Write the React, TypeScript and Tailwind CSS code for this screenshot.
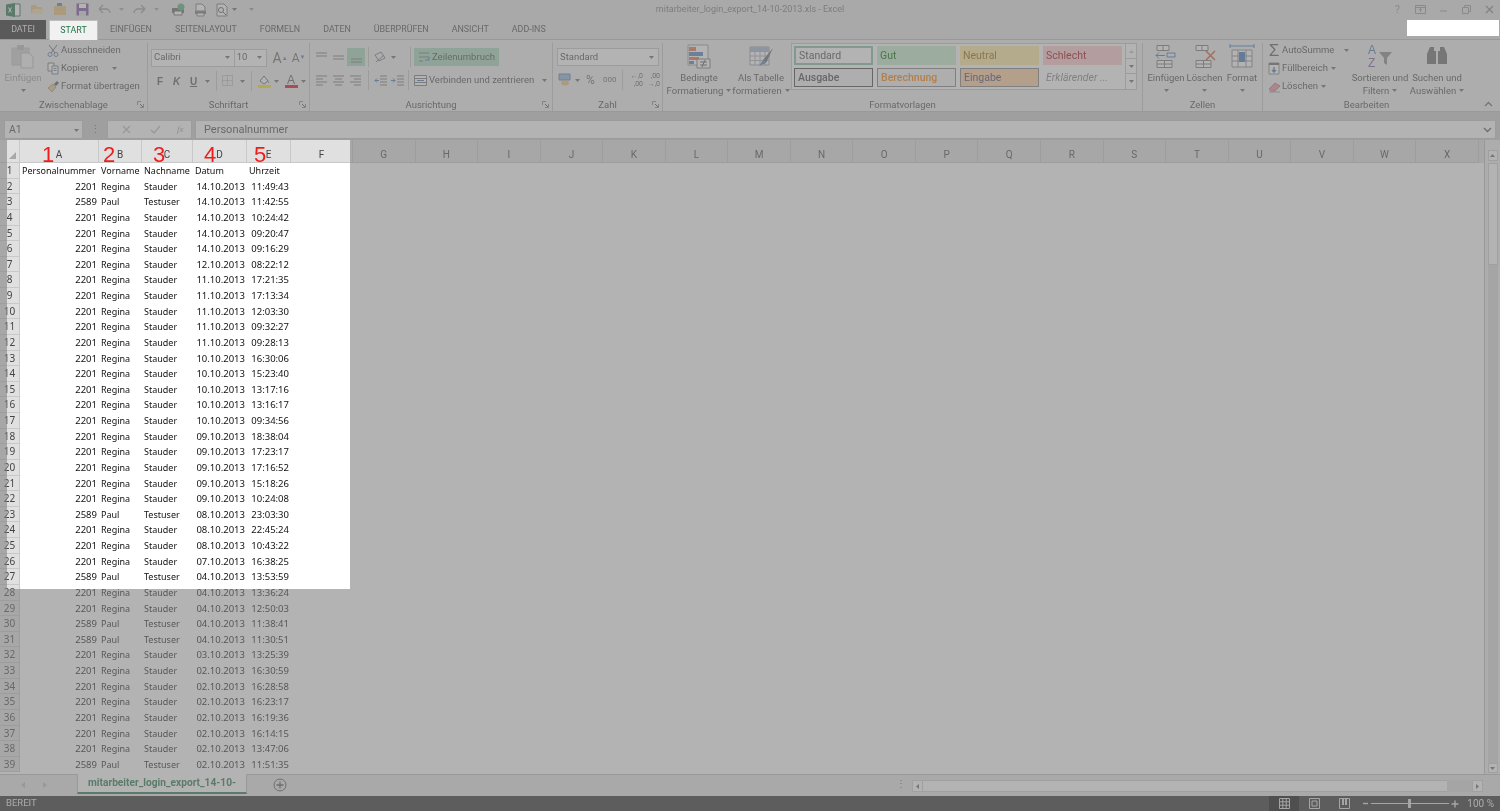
import React from "react";

const R = ["Regina", "Stauder"];
const P = ["Paul", "Testuser"];
const rows: [string[], string, string][] = [
  [R, "14.10.2013", "11:49:43"], [P, "14.10.2013", "11:42:55"], [R, "14.10.2013", "10:24:42"], [R, "14.10.2013", "09:20:47"],
  [R, "14.10.2013", "09:16:29"], [R, "12.10.2013", "08:22:12"], [R, "11.10.2013", "17:21:35"], [R, "11.10.2013", "17:13:34"],
  [R, "11.10.2013", "12:03:30"], [R, "11.10.2013", "09:32:27"], [R, "11.10.2013", "09:28:13"], [R, "10.10.2013", "16:30:06"],
  [R, "10.10.2013", "15:23:40"], [R, "10.10.2013", "13:17:16"], [R, "10.10.2013", "13:16:17"], [R, "10.10.2013", "09:34:56"],
  [R, "09.10.2013", "18:38:04"], [R, "09.10.2013", "17:23:17"], [R, "09.10.2013", "17:16:52"], [R, "09.10.2013", "15:18:26"],
  [R, "09.10.2013", "10:24:08"], [P, "08.10.2013", "23:03:30"], [R, "08.10.2013", "22:45:24"], [R, "08.10.2013", "10:43:22"],
  [R, "07.10.2013", "16:38:25"], [P, "04.10.2013", "13:53:59"], [R, "04.10.2013", "13:36:24"], [R, "04.10.2013", "12:50:03"],
  [P, "04.10.2013", "11:38:41"], [P, "04.10.2013", "11:30:51"], [R, "03.10.2013", "13:25:39"], [R, "02.10.2013", "16:30:59"],
  [R, "02.10.2013", "16:28:58"], [R, "02.10.2013", "16:23:17"], [R, "02.10.2013", "16:19:36"], [R, "02.10.2013", "16:14:15"],
  [R, "02.10.2013", "13:47:06"], [P, "02.10.2013", "11:51:35"],
];

const cols: [string, string][] = [
  ["A", "w-[79px]"], ["B", "w-[43px]"], ["C", "w-[51px]"], ["D", "w-[54px]"], ["E", "w-[44px]"],
  ["F", "w-[62px]"], ["G", "w-[62.55px]"], ["H", "w-[62.55px]"], ["I", "w-[62.55px]"], ["J", "w-[62.55px]"], ["K", "w-[62.55px]"],
  ["L", "w-[62.55px]"], ["M", "w-[62.55px]"], ["N", "w-[62.55px]"], ["O", "w-[62.55px]"], ["P", "w-[62.55px]"], ["Q", "w-[62.55px]"],
  ["R", "w-[62.55px]"], ["S", "w-[62.55px]"], ["T", "w-[62.55px]"], ["U", "w-[62.55px]"], ["V", "w-[62.55px]"], ["W", "w-[62.55px]"], ["X", "w-[62.55px]"],
];

const Caret = ({ className = "" }: { className?: string }) => (
  <svg width="5" height="3" viewBox="0 0 5 3" className={`shrink-0 ${className}`}><path d="M0 0h5L2.5 3z" fill="#666" /></svg>
);

const Sep = () => <div className="w-px h-[20px] bg-[#c6c6c6] shrink-0" />;

const Launcher = () => (
  <svg width="7" height="7" viewBox="0 0 7 7" className="absolute right-[3px] bottom-[3px]">
    <path d="M.5 4V.5H4M6.5 3v3.500H3" fill="none" stroke="#8a8a8a" /><path d="M3 3l3 3" stroke="#555" />
  </svg>
);

const Group = ({ w, label, children, last }: { w: string; label: string; children?: React.ReactNode; last?: boolean }) => (
  <div className={`${w} relative shrink-0 flex flex-col h-[68px] ${last ? "" : "border-r border-[#c6c6c6]"}`}>
    <div className="flex-1 min-h-0">{children}</div>
    <div className="h-[13px] leading-[13px] text-center text-[9.500px] text-[#444]">{label}</div>
  </div>
);

const BigBtn = ({ w, l1, l2, caret, icon, muted }: { w: string; l1: string; l2?: string; caret?: boolean; icon: React.ReactNode; muted?: boolean }) => (
  <div className={`${w} shrink-0 flex flex-col items-center text-[9.500px] leading-[13px] ${muted ? "text-[#9a9a9a]" : "text-[#444]"}`}>
    <div className="h-[26px] flex items-center justify-center">{icon}</div>
    <div className="mt-[2px] whitespace-nowrap">{l1}</div>
    <div className="flex items-center gap-[3px] h-[13px] whitespace-nowrap">{l2}{caret && <Caret />}</div>
  </div>
);

const SmallRow = ({ icon, label, caret, gap = "ml-[4px]" }: { icon: React.ReactNode; label: string; caret?: boolean; gap?: string }) => (
  <div className="h-[18px] flex items-center text-[9.500px] text-[#444] whitespace-nowrap">
    <span className="w-[14px] flex justify-center">{icon}</span>
    <span className="ml-[1px]">{label}</span>
    {caret && <Caret className={gap} />}
  </div>
);

const AlignIcon = ({ kind }: { kind: "l" | "c" | "r" | "t" | "m" | "b" }) => {
  const ls: Record<string, string> = {
    l: "M1 2h11M1 5h7M1 8h11M1 11h7",
    c: "M1 2h11M3 5h7M1 8h11M3 11h7",
    r: "M1 2h11M5 5h7M1 8h11M5 11h7",
    t: "M1 2h11M1 5h11",
    m: "M1 5h11M1 8h11",
    b: "M1 8h11M1 11h11",
  };
  return <svg width="13" height="13" viewBox="0 0 13 13"><path d={ls[kind]} stroke="#777" fill="none" /></svg>;
};

const Grid3 = ({ hi }: { hi?: React.ReactNode }) => (
  <svg width="26" height="26" viewBox="0 0 26 26">
    <path d="M4 2.500h12v5H4zM4 2.500h6v5M4 17.500h15v7H4zM4 21h15M11.500 17.500v7" fill="#fff" stroke="#777" />
    {hi}
  </svg>
);

const Style = ({ text, cls }: { text: string; cls: string }) => (
  <div className={`h-[19px] w-[79px] shrink-0 flex items-center pl-[3px] text-[10.500px] whitespace-nowrap overflow-hidden ${cls}`}>{text}</div>
);

function Ribbon() {
  return (
    <div className="h-[73px] bg-[#f1f1f1] border-t border-[#bdbdbd] border-b flex pt-[3px] pl-0 shrink-0 relative">
      <Group w="w-[148px]" label="Zwischenablage">
        <div className="flex">
          <BigBtn w="w-[46px]" l1="Einfügen" muted caret icon={
            <svg width="24" height="26" viewBox="0 0 24 26"><path d="M1 5h17v17H1z" fill="#d0d0d0" stroke="#c0c0c0" /><path d="M6 2h7v5H6z" fill="#bbb" /><path d="M10 10h8l4 4v11H10z" fill="#f5f5f5" stroke="#bbb" /></svg>
          } />
          <div className="flex flex-col -mt-[1.500px]">
            <SmallRow label="Ausschneiden" icon={<svg width="12" height="13" viewBox="0 0 12 13"><path d="M2 1l6 8M10 1L4 9" stroke="#667" fill="none" /><circle cx="3" cy="10.500" r="2" fill="none" stroke="#5f7fa8" /><circle cx="9" cy="10.500" r="2" fill="none" stroke="#5f7fa8" /></svg>} />
            <SmallRow label="Kopieren" caret gap="ml-[14px]" icon={<svg width="12" height="13" viewBox="0 0 12 13"><path d="M1 1h6v8H1z" fill="#fff" stroke="#777" /><path d="M5 4h6v8H5z" fill="#fff" stroke="#777" /><path d="M6.500 6.500h3M6.500 8.500h3" stroke="#5f7fa8" /></svg>} />
            <SmallRow label="Format übertragen" icon={<svg width="13" height="13" viewBox="0 0 13 13"><path d="M1 8l5-4 3 3-4 5z" fill="#e2c68f" stroke="#b59b6a" /><path d="M7 4l3-3 2 2-3 3z" fill="#555" /></svg>} />
          </div>
        </div>
        <Launcher />
      </Group>

      <Group w="w-[162px]" label="Schriftart">
        <div className="pl-[3px] flex items-center h-[19px] mt-[5px] text-[9.500px] text-[#444]">
          <div className="w-[87px] h-[18px] bg-white border border-[#c6c6c6] flex items-center justify-between px-[2px]">Calibri<Caret className="mr-[2px]" /></div>
          <div className="w-[33px] h-[18px] bg-white border border-l-0 border-[#c6c6c6] flex items-center justify-between px-[2px]">10<Caret className="mr-[2px]" /></div>
          <span className="ml-[6px] w-[20px] text-[14px] text-[#666] leading-none">A<sup className="text-[#4f81bd] text-[6px]">▲</sup></span>
          <span className="w-[18px] text-[12px] text-[#666] leading-none">A<sup className="text-[#4f81bd] text-[6px]">▼</sup></span>
        </div>
        <div className="pl-[4px] flex items-center h-[18px] mt-[5px] text-[10px] text-[#555]">
          <span className="w-[16px] text-center font-bold font-['Liberation_Sans']">F</span>
          <span className="w-[17px] text-center font-bold italic font-['Liberation_Sans']">K</span>
          <span className="w-[17px] text-center font-bold underline font-['Liberation_Sans']">U</span>
          <Caret className="ml-[3px]" />
          <span className="ml-[6px]"><Sep /></span>
          <svg width="12" height="12" viewBox="0 0 12 12" className="ml-[5px]"><path d="M.500.500h10v10H.500zM5.500.500v10M.500 5.500h10" fill="none" stroke="#999" strokeDasharray="1 1" /></svg>
          <Caret className="ml-[6px]" />
          <span className="ml-[6px]"><Sep /></span>
          <span className="ml-[5px] w-[14px] flex flex-col items-center">
            <svg width="12" height="10" viewBox="0 0 12 10"><path d="M2 6l4-5 4 5-4 3z" fill="#fff" stroke="#666" /><path d="M9 5l2 3" stroke="#5f7fa8" /></svg>
            <span className="w-[13px] h-[3px] bg-[#ffe600]" />
          </span>
          <Caret className="ml-[3px]" />
          <span className="ml-[5px] w-[14px] flex flex-col items-center leading-[10px] text-[#555] font-['Liberation_Sans'] text-[12px]">A<span className="w-[13px] h-[3px] bg-[#e00010]" /></span>
          <Caret className="ml-[3px]" />
        </div>
        <Launcher />
      </Group>

      <Group w="w-[243px]" label="Ausrichtung">
        <div className="flex items-center h-[18px] mt-[5px] pl-[5px] text-[9.500px] text-[#444]">
          <span className="w-[17px]"><AlignIcon kind="t" /></span>
          <span className="w-[14px]"><AlignIcon kind="m" /></span>
          <span className="w-[18px] h-[18px] bg-[#a9d8bf] flex items-center justify-center ml-[1px]"><AlignIcon kind="b" /></span>
          <span className="ml-[3px]"><Sep /></span>
          <svg width="14" height="13" viewBox="0 0 14 13" className="ml-[5px]"><path d="M1 4l6-3 4 6-6 3z" fill="none" stroke="#777" /><path d="M2 11l8-7" stroke="#5f7fa8" /></svg>
          <Caret className="ml-[3px]" />
          <span className="ml-[14px]"><Sep /></span>
          <div className="ml-[3px] w-[85px] h-[18px] bg-[#a9d8bf] flex items-center pl-[4px]">
            <svg width="12" height="13" viewBox="0 0 12 13"><path d="M1 2h10M1 6h7M1 10h4" stroke="#777" /><path d="M8 6h3v3H7" fill="none" stroke="#3a76b8" /></svg>
            <span className="ml-[2px]">Zeilenumbruch</span>
          </div>
        </div>
        <div className="flex items-center h-[18px] mt-[5px] pl-[5px] text-[9.500px] text-[#444]">
          <span className="w-[17px]"><AlignIcon kind="l" /></span>
          <span className="w-[17px]"><AlignIcon kind="c" /></span>
          <span className="w-[17px]"><AlignIcon kind="r" /></span>
          <span className="ml-[2px]"><Sep /></span>
          <span className="ml-[5px] w-[17px] flex"><svg width="13" height="13" viewBox="0 0 13 13"><path d="M6 2h7M6 5h7M6 8h7M6 11h7" stroke="#777" /><path d="M5 6.500H1l2-2M1 6.500l2 2" fill="none" stroke="#3a76b8" /></svg></span>
          <span className="w-[14px] flex"><svg width="13" height="13" viewBox="0 0 13 13"><path d="M6 2h7M6 5h7M6 8h7M6 11h7" stroke="#777" /><path d="M0 6.500h4l-2-2M4 6.500l-2 2" fill="none" stroke="#3a76b8" /></svg></span>
          <span className="ml-[3px]"><Sep /></span>
          <svg width="13" height="13" viewBox="0 0 13 13" className="ml-[5px] shrink-0"><path d="M.500 1.500h12v10H.500zM.500 4.500h12M.500 8.500h12" fill="#fff" stroke="#777" /><path d="M3 6.500h7" stroke="#3a76b8" /></svg>
          <span className="ml-[2px] whitespace-nowrap">Verbinden und zentrieren</span>
          <Caret className="ml-[8px]" />
        </div>
        <Launcher />
      </Group>

      <Group w="w-[110px]" label="Zahl">
        <div className="pl-[4px] mt-[5px] text-[9.500px] text-[#444]">
          <div className="w-[102px] h-[18px] bg-white border border-[#c6c6c6] flex items-center justify-between px-[2px]">Standard<Caret className="mr-[2px]" /></div>
        </div>
        <div className="flex items-center h-[18px] mt-[5px] pl-[5px] text-[#666]">
          <svg width="14" height="14" viewBox="0 0 14 14"><path d="M1 1h11v6H1z" fill="#8fb3dc" stroke="#5f7fa8" /><ellipse cx="7" cy="10" rx="4" ry="2.500" fill="#e8c27a" /></svg>
          <Caret className="ml-[3px]" />
          <span className="ml-[6px] w-[15px] text-[12px] leading-none">%</span>
          <span className="ml-[2px] w-[17px] text-[8px] leading-none">000</span>
          <span className="ml-[2px]"><Sep /></span>
          <span className="ml-[4px] w-[16px] text-[7px] leading-[8px] text-[#555] text-right">←,0<br />,00</span>
          <span className="ml-[1px] w-[16px] text-[7px] leading-[8px] text-[#555] text-right">,00<br />→,0</span>
        </div>
        <Launcher />
      </Group>

      <Group w="w-[480px]" label="Formatvorlagen">
        <div className="flex">
          <BigBtn w="w-[66px] ml-[3px]" l1="Bedingte" l2="Formatierung" caret icon={
            <svg width="24" height="25" viewBox="0 0 24 25"><path d="M1 1h20v20H1z" fill="#fff" stroke="#999" /><path d="M2 3h7v4H2z" fill="#e0704a" /><path d="M2 8h14v4H2z" fill="#4f81bd" /><path d="M2 13h10v3H2z" fill="#e0704a" /><path d="M2 17h5v3H2z" fill="#4f81bd" /><path d="M10 15h13v9H10z" fill="#fff" stroke="#777" /><path d="M13 18h7M13 21h7M18 16l-3 7" stroke="#555" fill="none" /></svg>
          } />
          <BigBtn w="w-[58px]" l1="Als Tabelle" l2="formatieren" caret icon={
            <svg width="25" height="25" viewBox="0 0 25 25"><path d="M1 3h19v18H1z" fill="#fff" stroke="#999" /><path d="M1 7.500h19M1 12h19M1 16.500h19M6 3v18M11 3v18M16 3v18" stroke="#aab" /><path d="M1 3h19v4H1z" fill="#9db4d0" /><path d="M24 4L14 16l3 3z" fill="#666" /><path d="M10 22l4-6 3 3z" fill="#4f81bd" /></svg>
          } />
          <div className="ml-[1px] w-[346px] h-[47px] border border-[#c6c6c6] bg-white flex">
            <div className="flex-1 flex flex-col pl-[2px] pt-[2px] gap-[3px]">
              <div className="flex gap-[4px]">
                <Style text="Standard" cls="bg-white border-2 border-[#7fc2a0] text-[#444] pl-[2px]" />
                <Style text="Gut" cls="bg-[#c6efce] text-[#006100]" />
                <Style text="Neutral" cls="bg-[#ffeb9c] text-[#9c6500]" />
                <Style text="Schlecht" cls="bg-[#ffc7ce] text-[#9c0006]" />
              </div>
              <div className="flex gap-[4px]">
                <Style text="Ausgabe" cls="bg-[#f2f2f2] border border-[#3f3f3f] text-[#3f3f3f] font-medium pl-[2px]" />
                <Style text="Berechnung" cls="bg-[#f2f2f2] border border-[#7f7f7f] text-[#fa7d00] font-medium pl-[2px]" />
                <Style text="Eingabe" cls="bg-[#ffcc99] border border-[#7f7f7f] text-[#3f3f76] pl-[2px]" />
                <Style text="Erklärender ..." cls="text-[#7f7f7f] italic" />
              </div>
            </div>
            <div className="w-[11px] flex flex-col border-l border-[#c6c6c6] mr-[0px]">
              <div className="h-[15px] flex items-center justify-center border-b border-[#c6c6c6]"><Caret className="rotate-180 opacity-40" /></div>
              <div className="h-[15px] flex items-center justify-center border-b border-[#c6c6c6]"><Caret /></div>
              <div className="flex-1 flex items-center justify-center"><Caret /></div>
            </div>
          </div>
        </div>
      </Group>

      <Group w="w-[120px]" label="Zellen">
        <div className="flex pl-[4px]">
          <BigBtn w="w-[38px]" l1="Einfügen" caret icon={<Grid3 hi={<path d="M3 12.500h9m-9 0l3-3m-3 3l3 3M14 10h8v4h-8z" fill="none" stroke="#3a76b8" />} />} />
          <BigBtn w="w-[39px]" l1="Löschen" caret icon={<Grid3 hi={<path d="M14 8l9 9m0-9l-9 9" stroke="#d2562f" strokeWidth="1.500" />} />} />
          <BigBtn w="w-[36px]" l1="Format" caret icon={
            <svg width="26" height="26" viewBox="0 0 26 26"><path d="M1 3h24M1 1v4M25 1v4" stroke="#3a76b8" fill="none" /><path d="M3 7h20v17H3zM3 13h20M3 18h20M9 7v17M17 7v17" fill="#fff" stroke="#888" /><path d="M10 9h6v10h-6z" fill="#3a76b8" /></svg>
          } />
        </div>
      </Group>

      <Group w="w-[207px]" label="Bearbeiten" last>
        <div className="flex">
          <div className="flex flex-col pl-[4px] w-[88px] -mt-[1.500px]">
            <SmallRow label="AutoSumme" caret gap="ml-[10px]" icon={<span className="text-[17px] leading-none text-[#555] font-['Liberation_Sans']">Σ</span>} />
            <SmallRow label="Füllbereich" caret gap="ml-[3px]" icon={<svg width="12" height="13" viewBox="0 0 12 13"><path d="M1 1h10v11H1z" fill="#fff" stroke="#888" /><path d="M1 1h10v2H1z" fill="#666" /><path d="M6 5v5M4 8l2 2 2-2" fill="none" stroke="#3a76b8" strokeWidth="1.400" /></svg>} />
            <SmallRow label="Löschen" caret gap="ml-[3px]" icon={<svg width="13" height="12" viewBox="0 0 13 12"><path d="M1 8l6-6 5 3-5 5H3z" fill="#ee8f9b" stroke="#c9707d" /><path d="M1 11h11" stroke="#999" /></svg>} />
          </div>
          <BigBtn w="w-[58px]" l1="Sortieren und" l2="Filtern" caret icon={
            <svg width="26" height="26" viewBox="0 0 26 26"><text x="1" y="11" fontSize="12" fill="#3a76b8" fontFamily="Liberation Sans">A</text><text x="1" y="24" fontSize="12" fill="#7a5aa8" fontFamily="Liberation Sans">Z</text><path d="M12 9h13l-5 6v7l-3-2v-5z" fill="#888" /></svg>
          } />
          <BigBtn w="w-[56px]" l1="Suchen und" l2="Auswählen" caret icon={
            <svg width="24" height="24" viewBox="0 0 24 24"><path d="M5 3h4v4h2v13H2V10zM15 3h4l3 7v10h-9V7h2z" fill="#666" /></svg>
          } />
        </div>
      </Group>
      <svg width="9" height="6" viewBox="0 0 9 6" className="absolute right-[7px] bottom-[4px]"><path d="M1 5l3.500-3.500L8 5" fill="none" stroke="#666" strokeWidth="1.400" /></svg>
    </div>
  );
}

export default function App() {
  return (
    <div className="relative w-[1500px] h-[811px] overflow-hidden bg-white font-['Roboto','Noto_Sans',sans-serif] [filter:blur(0.45px)]">
      <div className="flex flex-col h-full">
        {/* Title bar */}
        <div className="h-[19px] bg-[#e6e6e6] grid grid-cols-3 items-center shrink-0">
          <div className="flex items-center pl-[6px] gap-[9px]">
            <svg width="15" height="14" viewBox="0 0 15 14"><path d="M7 1h7v12H7z" fill="#fff" stroke="#217346" /><path d="M0 1.500L9 0v14l-9-1.500z" fill="#217346" /><path d="M2.500 4.500l3 5m0-5l-3 5" stroke="#fff" /></svg>
            <svg width="14" height="11" viewBox="0 0 14 11"><path d="M1 1h5l1 2h5v2H4l-3 5z" fill="#e8c27a" /><path d="M3 5h11l-2 5H1z" fill="#f2d9a8" /></svg>
            <svg width="14" height="13" viewBox="0 0 14 13"><path d="M1 3h12v9H1z" fill="#e8c27a" /><path d="M4 0h5v3H4z" fill="#4f81bd" /></svg>
            <svg width="13" height="13" viewBox="0 0 13 13"><path d="M.500.500h12v12H.500z" fill="#7a4fa3" /><path d="M3 1h7v4H3z" fill="#fff" /><path d="M3 8h7v5H3z" fill="#ddd" /></svg>
            <span className="text-[#999] flex items-center gap-[3px]">
              <svg width="13" height="11" viewBox="0 0 13 11"><path d="M1 5l4-4M1 5l4 4M1 5h7a4 4 0 014 4" fill="none" stroke="#999" strokeWidth="1.300" /></svg><Caret className="opacity-50 ml-[5px]" />
            </span>
            <span className="text-[#999] flex items-center gap-[3px]">
              <svg width="13" height="11" viewBox="0 0 13 11"><path d="M12 5L8 1m4 4L8 9m4-4H5a4 4 0 00-4 4" fill="none" stroke="#999" strokeWidth="1.300" /></svg><Caret className="opacity-50 ml-[5px]" />
            </span>
            <svg width="14" height="13" viewBox="0 0 14 13" className="ml-[3px]"><path d="M1 5h12v5H1z" fill="#666" /><path d="M3 8h8v4H3z" fill="#fff" stroke="#666" /><circle cx="10" cy="4" r="3.500" fill="#4fae7d" /></svg>
            <svg width="13" height="14" viewBox="0 0 13 14"><path d="M2 1h6l3 3v4H2z" fill="#fff" stroke="#777" /><path d="M1 8h11v3H1z" fill="#777" /><path d="M3 10h7v3H3z" fill="#fff" stroke="#777" /></svg>
            <span className="flex items-center gap-[4px]">
              <svg width="12" height="14" viewBox="0 0 12 14"><path d="M1 1h7l3 3v9H1z" fill="#fff" stroke="#777" /><circle cx="5" cy="7" r="2.500" fill="none" stroke="#555" /><path d="M7 9l3 3" stroke="#555" /></svg><Caret />
            </span>
            <Caret className="ml-[3px] opacity-60" />
          </div>
          <div className="text-center text-[9px] text-[#777] whitespace-nowrap">mitarbeiter_login_export_14-10-2013.xls - Excel</div>
          <div className="flex justify-end items-center pr-[6px] text-[#999]">
            <span className="text-[11px] leading-none mr-[15px]">?</span>
            <svg width="11" height="9" viewBox="0 0 11 9" className="mr-[13px]"><path d="M.500.500h10v8H.500zM.500 2.500h10M5.500 7V4M4 5l1.500-1.500L7 5" fill="none" stroke="#999" /></svg>
            <svg width="9" height="9" viewBox="0 0 9 9" className="mr-[14px]"><path d="M1 6h7" stroke="#999" /></svg>
            <svg width="9" height="9" viewBox="0 0 9 9" className="mr-[14px]"><path d="M.500 2.500h6v6h-6zM2.500 2.500v-2h6v6h-2" fill="none" stroke="#999" /></svg>
            <svg width="9" height="9" viewBox="0 0 9 9"><path d="M1 1l7 7m0-7L1 8" stroke="#888" strokeWidth="1.400" /></svg>
          </div>
        </div>

        {/* Tabs */}
        <div className="h-[20px] bg-[#e6e6e6] flex items-end text-[8.900px] text-[#444] shrink-0 relative">
          <div className="w-[46px] h-[19px] bg-[#222] text-[#f0f0f0] flex items-center justify-center">DATEI</div>
          <div className="ml-[3px] w-[49px] h-[20px] bg-[#f1f1f1] border border-b-0 border-[#bdbdbd] text-[#217346] flex items-center justify-center relative top-px z-10">START</div>
          <div className="flex h-[19px] items-center">
            <span className="ml-[12px]">EINFÜGEN</span>
            <span className="ml-[23px]">SEITENLAYOUT</span>
            <span className="ml-[23px]">FORMELN</span>
            <span className="ml-[23px]">DATEN</span>
            <span className="ml-[23px]">ÜBERPRÜFEN</span>
            <span className="ml-[23px]">ANSICHT</span>
            <span className="ml-[23px]">ADD-INS</span>
          </div>
        </div>

        <Ribbon />

        {/* Formula bar */}
        <div className="h-[28px] bg-[#cdcdcd] flex items-end gap-0 shrink-0 text-[10.500px] text-[#444] pb-[1px]">
          <div className="ml-[4px] w-[79px] h-[19px] bg-white border border-[#c6c6c6] flex items-center justify-between pl-[4px] pr-[3px] pt-[1px]">A1<Caret /></div>
          <div className="w-[24px] h-[19px] flex items-center justify-center text-[#666]">⋮</div>
          <div className="w-[85px] h-[19px] bg-white border border-[#c6c6c6] flex items-center text-[#999]">
            <svg width="9" height="9" viewBox="0 0 9 9" className="ml-[14px]"><path d="M1 1l7 7m0-7L1 8" stroke="#bbb" strokeWidth="1.300" /></svg>
            <svg width="11" height="9" viewBox="0 0 11 9" className="ml-[19px]"><path d="M1 5l3 3 6-7" stroke="#bbb" strokeWidth="1.300" fill="none" /></svg>
            <span className="ml-[16px] italic text-[9px] font-['Liberation_Serif']">fx</span>
          </div>
          <div className="ml-[3px] flex-1 mr-[4px] h-[19px] bg-white border border-[#c6c6c6] flex items-center justify-between pl-[8px] pr-[3px] pt-[1px] text-[11px]">
            Personalnummer
            <svg width="9" height="6" viewBox="0 0 9 6"><path d="M1 1l3.500 3.500L8 1" fill="none" stroke="#555" strokeWidth="1.400" /></svg>
          </div>
        </div>

        {/* Sheet */}
        <div className="flex-1 min-h-0 flex bg-[#d9d9d9]">
          <div className="flex-1 min-w-0 flex flex-col">
            <div className="h-[23px] flex shrink-0 bg-[#e0e0e0] text-[10px] text-[#444] overflow-hidden">
              <div className="w-[20px] shrink-0 border-r border-b border-[#c8c8c8] flex items-end justify-end p-[3px]">
                <svg width="7" height="7" viewBox="0 0 7 7"><path d="M7 0v7H0z" fill="#a8a8a8" /></svg>
              </div>
              {cols.map(([l, w]) => (
                <div key={l} className={`${w} shrink-0 border-r border-b border-[#c8c8c8] flex items-end justify-center pb-0 leading-[14px]`}>{l}</div>
              ))}
            </div>
            <div className="flex-1 min-h-0 overflow-hidden bg-white text-[9px] text-[#111] font-['Noto_Sans',sans-serif]">
              <Row n={1} a="Personalnummer" b="Vorname" c="Nachname" d="Datum" e="Uhrzeit" head />
              {rows.map((r, i) => (
                <Row key={i} n={i + 2} a={r[0] === R ? "2201" : "2589"} b={r[0][0]} c={r[0][1]} d={r[1]} e={r[2]} />
              ))}
            </div>
          </div>
          {/* vertical scrollbar */}
          <div className="w-[16px] shrink-0 bg-[#f1f1f1] flex flex-col items-center pt-[10px] pb-[1px] border-l border-[#bdbdbd]">
            <div className="w-[10px] h-[11px] bg-white border border-[#d0d0d0] flex items-center justify-center"><Caret className="rotate-180" /></div>
            <div className="w-[10px] h-[102px] mt-[2px] bg-white border border-[#d0d0d0]" />
            <div className="flex-1 w-[10px] bg-[#dcdcdc]" />
            <div className="w-[10px] h-[10px] bg-white border border-[#d0d0d0] flex items-center justify-center"><Caret /></div>
          </div>
        </div>

        {/* Sheet tabs */}
        <div className="h-[22px] bg-[#e6e6e6] border-t border-[#bdbdbd] flex items-start shrink-0 relative">
          <span className="ml-[21px] mt-[7px] w-0 h-0 border-y-[3px] border-y-transparent border-r-[4px] border-r-[#bbb]" />
          <span className="ml-[18px] mt-[7px] w-0 h-0 border-y-[3px] border-y-transparent border-l-[4px] border-l-[#bbb]" />
          <div className="ml-[30px] -mt-px w-[170px] h-[20px] bg-white border-x border-[#bdbdbd] border-b-2 border-b-[#217346] flex items-center justify-center text-[10.200px] font-bold text-[#217346] whitespace-nowrap">mitarbeiter_login_export_14-10-</div>
          <svg width="14" height="14" viewBox="0 0 14 14" className="ml-[26px] mt-[3px]"><circle cx="7" cy="7" r="6" fill="none" stroke="#555" /><path d="M7 3.500v7M3.500 7h7" stroke="#555" strokeWidth="1.300" /></svg>
          <span className="ml-[609px] mt-[2px] text-[10px] leading-[14px] text-[#666]">⋮</span>
          <div className="ml-[6px] mt-[5px] w-[571px] h-[12px] bg-[#f1f1f1] flex items-stretch">
            <div className="w-[11px] bg-white border border-[#d0d0d0] flex items-center justify-center"><Caret className="rotate-90" /></div>
            <div className="flex-1 bg-white border-y border-[#d0d0d0]" />
            <div className="w-[25px] bg-[#dcdcdc]" />
            <div className="w-[11px] bg-white border border-[#d0d0d0] flex items-center justify-center"><Caret className="-rotate-90" /></div>
          </div>
        </div>

        {/* Status bar */}
        <div className="h-[15px] bg-[#2a2a2a] flex items-center shrink-0 text-[9.500px] text-[#e6e6e6] relative">
          <span className="ml-[6px]">BEREIT</span>
          <div className="ml-auto flex items-center h-full">
            <div className="w-[30px] h-full bg-[#050505] flex items-center justify-center">
              <svg width="11" height="11" viewBox="0 0 11 11"><path d="M.500.500h10v10H.500zM.500 3.800h10M.500 7.200h10M3.800.500v10M7.200.500v10" fill="none" stroke="#ddd" /></svg>
            </div>
            <div className="w-[30px] flex justify-center"><svg width="11" height="11" viewBox="0 0 11 11"><path d="M.500.500h10v10H.500zM3 3h5v5H3z" fill="none" stroke="#ddd" /></svg></div>
            <div className="w-[30px] flex justify-center"><svg width="11" height="11" viewBox="0 0 11 11"><path d="M.500.500h10v10H.500z" fill="none" stroke="#ddd" /><path d="M3 1h2v6H3zM6 1h2v6H6z" fill="#ddd" /></svg></div>
            <svg width="7" height="7" viewBox="0 0 7 7" className="ml-[3px]"><path d="M1 3.500h5" stroke="#ddd" strokeWidth="1.400" /></svg>
            <div className="ml-[2px] w-[78px] h-px bg-[#ddd] relative">
              <div className="absolute left-[37px] -top-[4px] w-[3px] h-[9px] bg-[#ddd]" />
            </div>
            <svg width="8" height="8" viewBox="0 0 8 8" className="ml-[2px]"><path d="M.500 4h7M4 .500v7" stroke="#ddd" strokeWidth="1.400" /></svg>
            <span className="ml-[8px] mr-[6px] text-[10px]">100 %</span>
          </div>
        </div>
      </div>

      {/* Spotlight dim layer */}
      <div className="absolute left-[7px] top-[140px] w-[343px] h-[449px] shadow-[0_0_0_2000px_rgba(128,128,128,0.6)] pointer-events-none">
        <span className="absolute left-[35px] top-[3px] text-[22px] leading-[24px] text-[#ef1c1c] font-['Liberation_Sans']">1</span>
        <span className="absolute left-[96px] top-[3px] text-[22px] leading-[24px] text-[#ef1c1c] font-['Liberation_Sans']">2</span>
        <span className="absolute left-[146px] top-[3px] text-[22px] leading-[24px] text-[#ef1c1c] font-['Liberation_Sans']">3</span>
        <span className="absolute left-[197px] top-[3px] text-[22px] leading-[24px] text-[#ef1c1c] font-['Liberation_Sans']">4</span>
        <span className="absolute left-[247px] top-[3px] text-[22px] leading-[24px] text-[#ef1c1c] font-['Liberation_Sans']">5</span>
      </div>
      {/* Redacted account name */}
      <div className="absolute left-[1407px] top-[20px] w-[92px] h-[16px] bg-white" />
    </div>
  );
}

function Row({ n, a, b, c, d, e, head }: { n: number; a: string; b: string; c: string; d: string; e: string; head?: boolean }) {
  const num = head ? "" : "text-[9.500px]";
  return (
    <div className="h-[15.630px] flex leading-[15.630px] whitespace-nowrap">
      <div className="w-[20px] shrink-0 bg-[#e0e0e0] border-r border-b border-[#c8c8c8] text-center text-[10px] text-[#444]">{n}</div>
      <div className={`w-[79px] shrink-0 px-[2px] ${num} ${head ? "text-left" : "text-right"}`}>{a}</div>
      <div className="w-[43px] shrink-0 px-[2px]">{b}</div>
      <div className="w-[51px] shrink-0 px-[2px]">{c}</div>
      <div className={`w-[54px] shrink-0 px-[2px] ${num} ${head ? "text-left" : "text-right"}`}>{d}</div>
      <div className={`w-[44px] shrink-0 px-[2px] ${num} ${head ? "text-left" : "text-right"}`}>{e}</div>
    </div>
  );
}
